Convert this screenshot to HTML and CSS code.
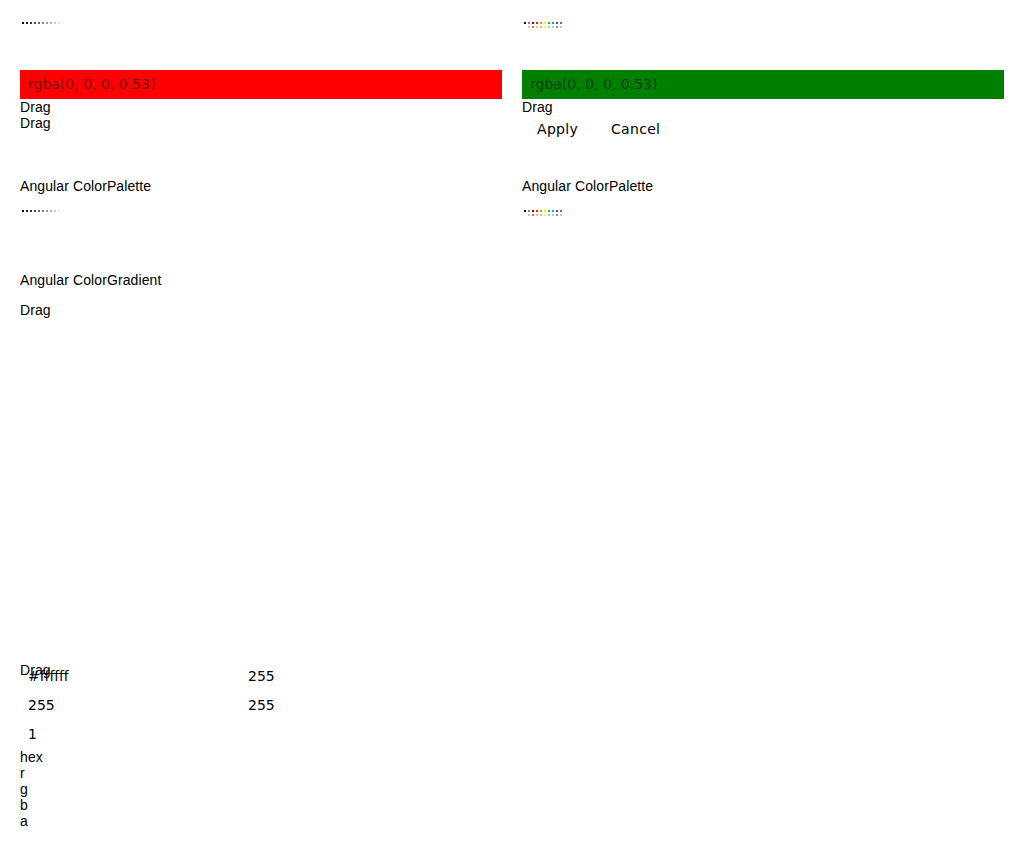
FILE: index.html
```html
<!DOCTYPE html>
<html>
<head>
<meta charset="utf-8">
<title>Angular Color Components</title>
<link rel="stylesheet" href="styles.css">
</head>
<body>
<div class="layout">
  <div class="cell">
    <table class="palette">
      <tr>
        <td style="background:#000000"></td><td style="background:#1a1a1a"></td><td style="background:#333333"></td><td style="background:#4d4d4d"></td><td style="background:#666666"></td><td style="background:#808080"></td><td style="background:#999999"></td><td style="background:#b3b3b3"></td><td style="background:#cccccc"></td><td style="background:#e6e6e6"></td><td style="background:#f2f2f2"></td><td style="background:#ffffff"></td>
      </tr>
    </table>
  </div>
  <div class="cell">
    <table class="palette">
      <tr>
        <td style="background:#000000"></td><td style="background:#7f7f7f"></td><td style="background:#880015"></td><td style="background:#ed1c24"></td><td style="background:#ff7f27"></td><td style="background:#fff200"></td><td style="background:#22b14c"></td><td style="background:#00a2e8"></td><td style="background:#3f48cc"></td><td style="background:#a349a4"></td>
      </tr>
      <tr>
        <td style="background:#ffffff"></td><td style="background:#c3c3c3"></td><td style="background:#b97a57"></td><td style="background:#ffaec9"></td><td style="background:#ffc90e"></td><td style="background:#efe4b0"></td><td style="background:#b5e61d"></td><td style="background:#99d9ea"></td><td style="background:#7092be"></td><td style="background:#c8bfe7"></td>
      </tr>
    </table>
  </div>

  <div class="cell picker">
    <input class="picker-input picker-red" type="text" value="rgba(0, 0, 0, 0.53)">
    <div class="drag">Drag</div>
    <div class="drag">Drag</div>
  </div>
  <div class="cell picker">
    <input class="picker-input picker-green" type="text" value="rgba(0, 0, 0, 0.53)">
    <div class="drag">Drag</div>
    <div class="actions">
      <button class="action-btn" type="button">Apply</button>
      <button class="action-btn" type="button">Cancel</button>
    </div>
  </div>

  <div class="cell section">
    <div class="title">Angular ColorPalette</div>
    <table class="palette palette-spaced">
      <tr>
        <td style="background:#000000"></td><td style="background:#1a1a1a"></td><td style="background:#333333"></td><td style="background:#4d4d4d"></td><td style="background:#666666"></td><td style="background:#808080"></td><td style="background:#999999"></td><td style="background:#b3b3b3"></td><td style="background:#cccccc"></td><td style="background:#e6e6e6"></td><td style="background:#f2f2f2"></td><td style="background:#ffffff"></td>
      </tr>
    </table>
  </div>
  <div class="cell section">
    <div class="title">Angular ColorPalette</div>
    <table class="palette palette-spaced">
      <tr>
        <td style="background:#000000"></td><td style="background:#7f7f7f"></td><td style="background:#880015"></td><td style="background:#ed1c24"></td><td style="background:#ff7f27"></td><td style="background:#fff200"></td><td style="background:#22b14c"></td><td style="background:#00a2e8"></td><td style="background:#3f48cc"></td><td style="background:#a349a4"></td>
      </tr>
      <tr>
        <td style="background:#ffffff"></td><td style="background:#c3c3c3"></td><td style="background:#b97a57"></td><td style="background:#ffaec9"></td><td style="background:#ffc90e"></td><td style="background:#efe4b0"></td><td style="background:#b5e61d"></td><td style="background:#99d9ea"></td><td style="background:#7092be"></td><td style="background:#c8bfe7"></td>
      </tr>
    </table>
  </div>

  <div class="cell gradient-section">
    <div class="title">Angular ColorGradient</div>
    <div class="drag drag-spaced">Drag</div>
    <div class="gradient-canvas"></div>
    <div class="gradient-inputs">
      <div class="drag drag-overlay">Drag</div>
      <div class="input-grid">
        <input class="value-input" type="text" value="#ffffff">
        <input class="value-input" type="text" value="255">
        <input class="value-input" type="text" value="255">
        <input class="value-input" type="text" value="255">
        <input class="value-input" type="text" value="1">
      </div>
      <div class="labels">
        <div>hex</div>
        <div>r</div>
        <div>g</div>
        <div>b</div>
        <div>a</div>
      </div>
    </div>
  </div>
</div>
</body>
</html>
```

FILE: styles.css
```css
html, body {
  margin: 0;
  padding: 0;
  background: #ffffff;
}

body {
  font-family: "Liberation Sans", Arial, sans-serif;
  font-size: 14px;
  line-height: normal;
  letter-spacing: 0.1px;
  color: #000000;
}

.layout {
  display: grid;
  grid-template-columns: 482px 482px;
  column-gap: 20px;
  align-items: start;
  padding: 20px;
}

.palette {
  border-spacing: 2px;
  border-collapse: separate;
}

.palette td {
  padding: 1px;
  width: 0;
  height: 0;
}

.palette-spaced {
  margin-top: 14px;
}

.picker {
  margin-top: 40px;
}

.picker-input {
  display: block;
  width: 100%;
  height: 29px;
  box-sizing: border-box;
  margin: 0;
  border: 0;
  padding: 0 8px 2px;
  font-family: "DejaVu Sans", sans-serif;
  font-size: 14px;
  letter-spacing: 0;
  color: rgba(0, 0, 0, 0.53);
  outline: none;
}

.picker-red {
  background: #ff0000;
}

.picker-green {
  background: #008000;
}

.drag {
  line-height: normal;
}

.actions {
  display: flex;
  gap: 3px;
}

.action-btn {
  margin: 0;
  padding: 5px 14px;
  border: 1px solid transparent;
  background: transparent;
  font-family: "DejaVu Sans", sans-serif;
  font-size: 14px;
  letter-spacing: 0.3px;
  color: #000000;
}

.section {
  margin-top: 35px;
}

.gradient-section {
  margin-top: 54px;
}

.drag-spaced {
  margin-top: 14px;
}

.gradient-canvas {
  height: 344px;
}

.gradient-inputs {
  position: relative;
}

.drag-overlay {
  position: absolute;
  top: 0;
  left: 0;
}

.input-grid {
  display: grid;
  grid-template-columns: 220px 220px;
  grid-auto-rows: 29px;
}

.value-input {
  width: 220px;
  height: 29px;
  box-sizing: border-box;
  margin: 0;
  border: 0;
  padding: 0 8px 2px;
  background: transparent;
  font-family: "DejaVu Sans", sans-serif;
  font-size: 14px;
  letter-spacing: 0;
  color: #000000;
  outline: none;
}
```
